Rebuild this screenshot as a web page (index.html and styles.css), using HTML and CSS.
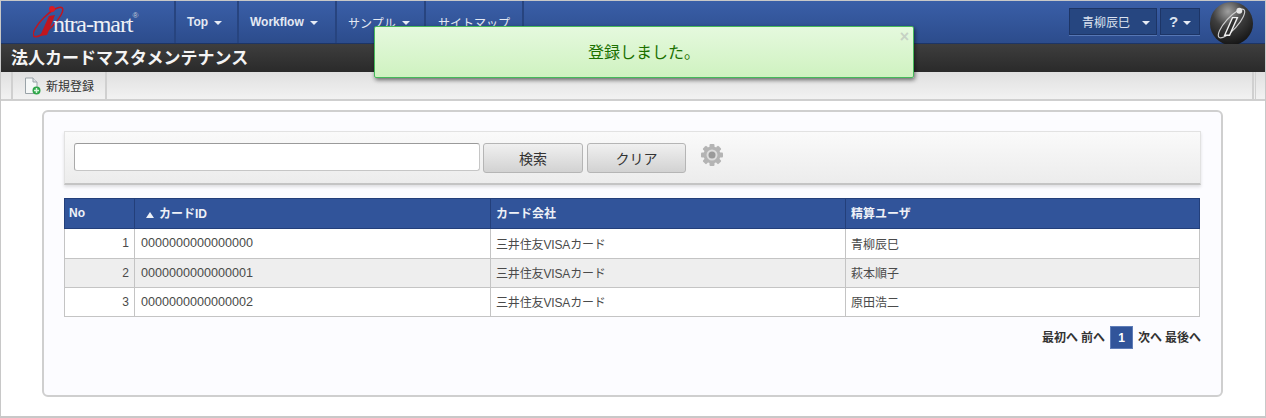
FILE: index.html
```html
<!DOCTYPE html>
<html lang="ja">
<head>
<meta charset="utf-8">
<title>法人カードマスタメンテナンス</title>
<link rel="stylesheet" href="styles.css">
</head>
<body>
<div class="frame">
  <header class="topbar">
    <a class="logo">
      <svg class="logo-mark" width="34" height="36" viewBox="0 0 34 36">
        <ellipse cx="15" cy="19" rx="6" ry="20" transform="rotate(45 15 19)" fill="none" stroke="#c0161f" stroke-width="1.5"/>
        <path d="M16 13 L22 12 L14 32 L7 33 Z" fill="#c0161f"/>
        <circle cx="19" cy="6" r="3" fill="#d81c24"/>
      </svg>
      <span class="logo-text">ntra-mart</span><span class="logo-reg">®</span>
    </a>
    <nav class="menu">
      <a class="menu-item m-top">Top <i class="caret"></i></a>
      <a class="menu-item m-wf">Workflow <i class="caret"></i></a>
      <a class="menu-item m-sample jp">サンプル <i class="caret"></i></a>
      <a class="menu-item m-map jp">サイトマップ</a>
    </nav>
    <div class="user">
      <a class="user-btn name">青柳辰巳 <i class="caret"></i></a>
      <a class="user-btn help"><b>?</b> <i class="caret"></i></a>
      <svg class="orb" width="45" height="45" viewBox="0 0 46 46">
        <defs>
          <radialGradient id="orbfill" cx="42%" cy="22%" r="80%">
            <stop offset="0" stop-color="#a0a0a0"/>
            <stop offset="0.45" stop-color="#3f3f3f"/>
            <stop offset="1" stop-color="#141414"/>
          </radialGradient>
        </defs>
        <circle cx="23" cy="23" r="22" fill="url(#orbfill)"/>
        <ellipse cx="23" cy="23" rx="6" ry="19" transform="rotate(42 23 23)" fill="none" stroke="#cfcfcf" stroke-width="1.2"/>
        <path d="M24 17 L29 17 L21 35 L16 35 Z" fill="#2f2f2f" stroke="#f2f2f2" stroke-width="1.4"/>
        <circle cx="31" cy="10" r="3" fill="#e6e6e6"/>
      </svg>
    </div>
  </header>
  <div class="titlebar">法人カードマスタメンテナンス</div>
  <div class="toolbar">
    <a class="tool">
      <svg width="18" height="18" viewBox="0 0 18 18">
        <path d="M2.5 1 H10 L14 5 V16.500 H2.500 Z" fill="#f6f8f8" stroke="#9aa3a8"/>
        <path d="M10 1 V5 H14" fill="#dfe4e6" stroke="#9aa3a8"/>
        <circle cx="13.500" cy="13.500" r="4" fill="#2fa64a"/>
        <path d="M13.500 11 V16 M11 13.500 H16" stroke="#d9f5dd" stroke-width="1.500"/>
      </svg>
      <span>新規登録</span>
    </a>
    <span class="tool-end"></span>
  </div>
  <main class="content">
    <section class="panel">
      <form class="search">
        <input class="search-input" type="text">
        <button class="btn" type="button">検索</button>
        <button class="btn btn-clear" type="button">クリア</button>
        <svg class="gear" width="24" height="24" viewBox="0 0 24 24">
          <g fill="#b4b4b4">
            <circle cx="12" cy="12" r="8.500"/>
            <rect x="9.500" y="1" width="5" height="22" rx="1"/>
            <rect x="9.500" y="1" width="5" height="22" rx="1" transform="rotate(45 12 12)"/>
            <rect x="9.500" y="1" width="5" height="22" rx="1" transform="rotate(90 12 12)"/>
            <rect x="9.500" y="1" width="5" height="22" rx="1" transform="rotate(135 12 12)"/>
          </g>
          <circle cx="12" cy="12" r="5.500" fill="#dcdcdc"/>
          <circle cx="12" cy="12" r="3.500" fill="#9a9a9a"/>
        </svg>
      </form>
      <table class="grid">
        <colgroup>
          <col class="c-no"><col class="c-id"><col class="c-co"><col>
        </colgroup>
        <thead>
          <tr><th>No</th><th class="sorted"><i class="sort"></i>カードID</th><th>カード会社</th><th>精算ユーザ</th></tr>
        </thead>
        <tbody>
          <tr class="first"><td class="num">1</td><td class="id">0000000000000000</td><td class="co">三井住友VISAカード</td><td>青柳辰巳</td></tr>
          <tr class="alt"><td class="num">2</td><td class="id">0000000000000001</td><td class="co">三井住友VISAカード</td><td>萩本順子</td></tr>
          <tr><td class="num">3</td><td class="id">0000000000000002</td><td class="co">三井住友VISAカード</td><td>原田浩二</td></tr>
        </tbody>
      </table>
      <div class="pager">
        <span>最初へ</span><span>前へ</span><b class="page">1</b><span>次へ</span><span>最後へ</span>
      </div>
    </section>
  </main>
  <div class="toast">
    <span class="toast-close">×</span>
    登録しました。
  </div>
</div>
</body>
</html>
```
FILE: styles.css
```css
* { box-sizing: border-box; }
html, body { margin: 0; padding: 0; }
body {
  width: 1266px;
  height: 418px;
  overflow: hidden;
  background: #fff;
  font-family: "Liberation Sans", "Noto Sans CJK JP", sans-serif;
}
.frame {
  position: relative;
  width: 1266px;
  height: 418px;
  border: 1px solid #c8c8c8;
  border-bottom-width: 2px;
  display: flex;
  flex-direction: column;
  background: #fdfdff;
}
.topbar {
  height: 43px;
  flex: none;
  display: flex;
  align-items: stretch;
  background: linear-gradient(#3a5fa8, #2c4c8c);
  border-bottom: 1px solid #1d3566;
  color: #e6ebf5;
}
.logo {
  width: 173px;
  flex: none;
  display: flex;
  align-items: center;
  padding-left: 32px;
}
.logo-mark { flex: none; margin-top: -2px; margin-right: -14px; }
.logo-text {
  font-family: "Liberation Serif", serif;
  font-size: 24px;
  color: #eef0f6;
  letter-spacing: -1.1px;
  margin-top: 4px;
}
.logo-reg { font-size: 8px; color: #c5cbd8; margin-top: -13px; }
.menu { display: flex; }
.menu-item {
  display: flex;
  align-items: center;
  gap: 6px;
  padding-left: 12px;
  border-left: 2px solid #27447f;
  font-size: 12px;
  font-weight: bold;
  color: #e4e9f3;
}
.m-top { width: 63px; padding-left: 11px; }
.m-wf { width: 98px; padding-left: 11px; }
.m-sample { width: 89px; padding-left: 11px; }
.m-map { width: 100px; border-right: 2px solid #27447f; }
.menu-item.jp { font-weight: normal; }
.caret {
  display: inline-block;
  width: 0;
  height: 0;
  border-left: 4px solid transparent;
  border-right: 4px solid transparent;
  border-top: 4px solid #e6ebf5;
  margin-top: 2px;
}
.user {
  margin-left: auto;
  display: flex;
  align-items: center;
  gap: 3px;
  padding-right: 11px;
}
.user-btn {
  height: 27px;
  margin-top: -1px;
  display: flex;
  align-items: center;
  justify-content: center;
  gap: 12px;
  padding-left: 6px;
  background: #264680;
  border: 1px solid #1d3566;
  box-shadow: 0 1px 0 #5677b5;
  font-size: 12px;
  color: #dbe2ef;
}
.user-btn.name { width: 88px; }
.user-btn.help { width: 40px; gap: 5px; padding-left: 0; font-size: 15px; }
.orb { margin-left: 6px; margin-top: 2px; flex: none; }
.titlebar {
  height: 28px;
  flex: none;
  background: linear-gradient(#3e3e3e, #2a2a2a);
  color: #f4f4f4;
  font-size: 17px;
  font-weight: bold;
  line-height: 29px;
  padding-left: 10px;
}
.toolbar {
  height: 29px;
  flex: none;
  display: flex;
  background: linear-gradient(#e0e0e0, #f2f2f2);
  border-bottom: 2px solid #cfcfcf;
  padding-left: 10px;
}
.tool {
  width: 96px;
  display: flex;
  align-items: center;
  gap: 5px;
  padding-left: 10px;
  border-left: 2px solid #d0d0d0;
  border-right: 2px solid #d0d0d0;
  font-size: 12px;
  color: #333;
}
.tool-end {
  width: 4px;
  margin-left: auto;
  margin-right: 9px;
  border-left: 2px solid #d0d0d0;
  border-right: 1px solid #d0d0d0;
}
.content {
  flex: 1;
  padding: 9px 42px 19px 41px;
  background: #fff;
}
.panel {
  height: 100%;
  background: #fcfcff;
  border: 2px solid #cfcfcf;
  border-radius: 6px;
  padding: 19px 20px 0 20px;
}
.search {
  height: 54px;
  display: flex;
  align-items: flex-start;
  padding: 11px 0 0 9px;
  background: linear-gradient(#fafafa, #ececec);
  border: 1px solid #e2e2e2;
  border-bottom: 2px solid #c4c4c4;
  box-shadow: 0 2px 3px rgba(0, 0, 0, 0.12);
}
.search-input {
  width: 406px;
  height: 28px;
  margin: 0 3px 0 0;
  background: #fff;
  border: 1px solid #c6c6c6;
  border-top: 1px solid #9a9a9a;
  border-left: 1px solid #aaa;
  border-radius: 3px;
}
.btn {
  width: 100px;
  height: 30px;
  margin-right: 4px;
  background: linear-gradient(#f0f0f0, #d2d2d2);
  border: 1px solid #b5b5b5;
  border-radius: 3px;
  font-family: inherit;
  font-size: 14px;
  color: #333;
  padding: 0;
}
.btn-clear { width: 99px; margin-right: 3px; }
.gear { margin-left: 11px; }
.grid {
  width: 1136px;
  margin-top: 13px;
  border-collapse: collapse;
  table-layout: fixed;
  font-size: 12px;
  color: #4a4a4a;
}
.c-no { width: 70px; }
.c-id { width: 356px; }
.c-co { width: 355px; }
.grid th {
  height: 30px;
  background: #31549a;
  border: 1px solid #233f7a;
  border-left: 1px solid #5f7db8;
  color: #eef1f7;
  font-weight: bold;
  text-align: left;
  padding: 0 5px 2px;
}
.grid th:first-child { border-left: 1px solid #233f7a; padding-left: 4px; }
.grid th.sorted { padding-left: 11px; }
.sort {
  display: inline-block;
  width: 0;
  height: 0;
  margin-right: 5px;
  border-left: 4px solid transparent;
  border-right: 4px solid transparent;
  border-bottom: 6px solid #eef1f7;
}
.grid td {
  height: 29px;
  background: #fff;
  border: 1px solid #c4c4c4;
  padding: 0 5px 1px;
}
.grid .first td { height: 30px; }
.grid .alt td { background: #eeeeee; }
.grid td.num { text-align: right; }
.grid td.id { font-size: 12.6px; padding-left: 6px; }
.grid td.co { letter-spacing: -0.15px; }
.pager {
  display: flex;
  justify-content: flex-end;
  align-items: center;
  gap: 3px;
  margin-top: 9px;
  font-size: 12px;
  font-weight: bold;
  color: #333;
}
.pager span { margin-top: -3px; }
.page {
  width: 23px;
  height: 23px;
  margin: 0 2px;
  display: flex;
  align-items: center;
  justify-content: center;
  background: #31549a;
  border: 1px solid #5f7db8;
  color: #fff;
}
.toast {
  position: absolute;
  left: 373px;
  top: 25px;
  width: 540px;
  height: 52px;
  display: flex;
  align-items: center;
  justify-content: center;
  background: linear-gradient(#e5f9de, #cff2c0);
  border: 1px solid #46b85a;
  border-radius: 2px;
  box-shadow: 1px 2px 4px rgba(0, 0, 0, 0.55);
  color: #1a7000;
  font-size: 16px;
  padding-bottom: 3px;
}
.toast-close {
  position: absolute;
  right: 4px;
  top: 2px;
  font-size: 16px;
  font-weight: bold;
  line-height: 16px;
  color: #c6d2c4;
}
```
